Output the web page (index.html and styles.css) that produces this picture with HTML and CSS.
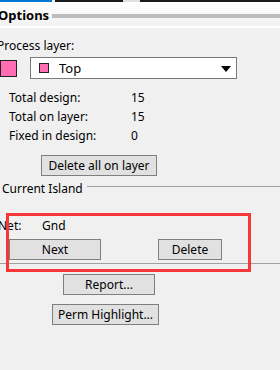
FILE: index.html
```html
<!DOCTYPE html>
<html lang="en">
<head>
    <meta charset="UTF-8">
    <meta name="viewport" content="width=device-width, initial-scale=1.0">
    <title>Options</title>
    <link rel="stylesheet" href="styles.css">
</head>
<body>
    <div class="topline"></div>
    <div class="header">
        <span class="header-title">Options</span>
        <span class="header-bar"></span>
    </div>

    <div class="panel">
        <div class="label process">Process layer:</div>
        <div class="layer-row">
            <span class="swatch"></span>
            <div class="combo">
                <span class="combo-swatch"></span>
                <span class="combo-text">Top</span>
                <span class="combo-arrow"></span>
            </div>
        </div>

        <div class="stats">
            <div class="stat"><span class="stat-label">Total design:</span><span>15</span></div>
            <div class="stat"><span class="stat-label">Total on layer:</span><span>15</span></div>
            <div class="stat"><span class="stat-label">Fixed in design:</span><span>0</span></div>
        </div>

        <button class="btn btn-delete-all">Delete all on layer</button>

        <div class="group-title">
            <span>Current Island</span>
            <span class="group-line"></span>
        </div>

        <div class="net-row">
            <span class="net-label">Net:</span>
            <span>Gnd</span>
        </div>
        <div class="island-buttons">
            <button class="btn btn-next">Next</button>
            <button class="btn btn-del">Delete</button>
        </div>
        <div class="separator"></div>

        <button class="btn btn-report">Report...</button>
        <button class="btn btn-perm">Perm Highlight...</button>

        <div class="highlight-box"></div>
    </div>
</body>
</html>
```

FILE: styles.css
```css
body {
    margin: 0;
    width: 280px;
    height: 370px;
    overflow: hidden;
    background: #f0f0f0;
    font-family: 'Noto Sans', 'Segoe UI', sans-serif;
    font-size: 12px;
    color: #000;
    position: relative;
}
.topline {
    height: 2px;
    background: linear-gradient(to right, #0078d7 0 52px, #f0f0f0 52px 55px, #1a1a1a 55px 123px, #e0e0e0 123px 140px, #1a1a1a 140px);
}
.header {
    height: 24px;
    display: flex;
    align-items: center;
    background: linear-gradient(#ffffff, #f2f2f2);
    border-bottom: 2px solid #ffffff;
}
.header-title {
    font-weight: bold;
    font-size: 13px;
    margin-left: -2px;
    margin-top: 2px;
}
.header-bar {
    flex: 1;
    height: 4px;
    margin-left: 3px;
    margin-top: 3px;
    background: #bdbdbd;
}
.panel {
    padding-top: 9px;
}
.label.process {
    margin-left: -3px;
    height: 17px;
    line-height: 17px;
}
.layer-row {
    display: flex;
    align-items: flex-start;
    margin-top: 3px;
    height: 22px;
}
.swatch {
    width: 15px;
    height: 15px;
    margin-top: 3px;
    background: #ff6eb4;
    border: 1px solid #222;
}
.combo {
    margin-left: 13px;
    width: 205px;
    height: 20px;
    background: #fff;
    border: 1px solid #7a7a7a;
    display: flex;
    align-items: center;
}
.combo-swatch {
    width: 8px;
    height: 8px;
    margin-left: 8px;
    background: #ff6eb4;
    border: 1px solid #222;
}
.combo-text {
    margin-left: 10px;
    font-size: 13px;
    flex: 1;
}
.combo-arrow {
    width: 0;
    height: 0;
    border-left: 5px solid transparent;
    border-right: 5px solid transparent;
    border-top: 6px solid #000;
    margin-right: 5px;
    margin-top: 1px;
}
.stats {
    margin-top: 9px;
}
.stat {
    display: flex;
    height: 19px;
    line-height: 19px;
    padding-left: 9px;
}
.stat-label {
    width: 122px;
}
.btn {
    display: block;
    font-family: 'Noto Sans', 'Segoe UI', sans-serif;
    font-size: 12px;
    color: #000;
    background: #e1e1e1;
    border: 1px solid #7f7f7f;
    padding: 0;
    height: 21px;
    line-height: 18px;
}
.btn-delete-all {
    margin-top: 10px;
    margin-left: 41px;
    width: 116px;
}
.group-title {
    display: flex;
    align-items: center;
    height: 18px;
    margin-top: 3px;
    padding-left: 2px;
}
.group-line {
    flex: 1;
    height: 1px;
    background: #a0a0a0;
    margin-left: 4px;
    margin-top: -4px;
}
.net-row {
    display: flex;
    margin-top: 19px;
    height: 19px;
    line-height: 19px;
}
.net-label {
    margin-left: -2px;
    width: 44px;
}
.island-buttons {
    display: flex;
    margin-top: 4px;
}
.btn-next {
    margin-left: 9px;
    width: 92px;
}
.btn-del {
    margin-left: 57px;
    width: 64px;
}
.separator {
    height: 1px;
    background: #a0a0a0;
    margin-top: 3px;
}
.btn-report {
    margin-top: 10px;
    margin-left: 63px;
    width: 92px;
    height: 21px;
}
.btn-perm {
    margin-top: 9px;
    margin-left: 52px;
    width: 107px;
}
.highlight-box {
    position: absolute;
    left: 6px;
    top: 213px;
    width: 239px;
    height: 53px;
    border: 3px solid #f83838;
}
```
